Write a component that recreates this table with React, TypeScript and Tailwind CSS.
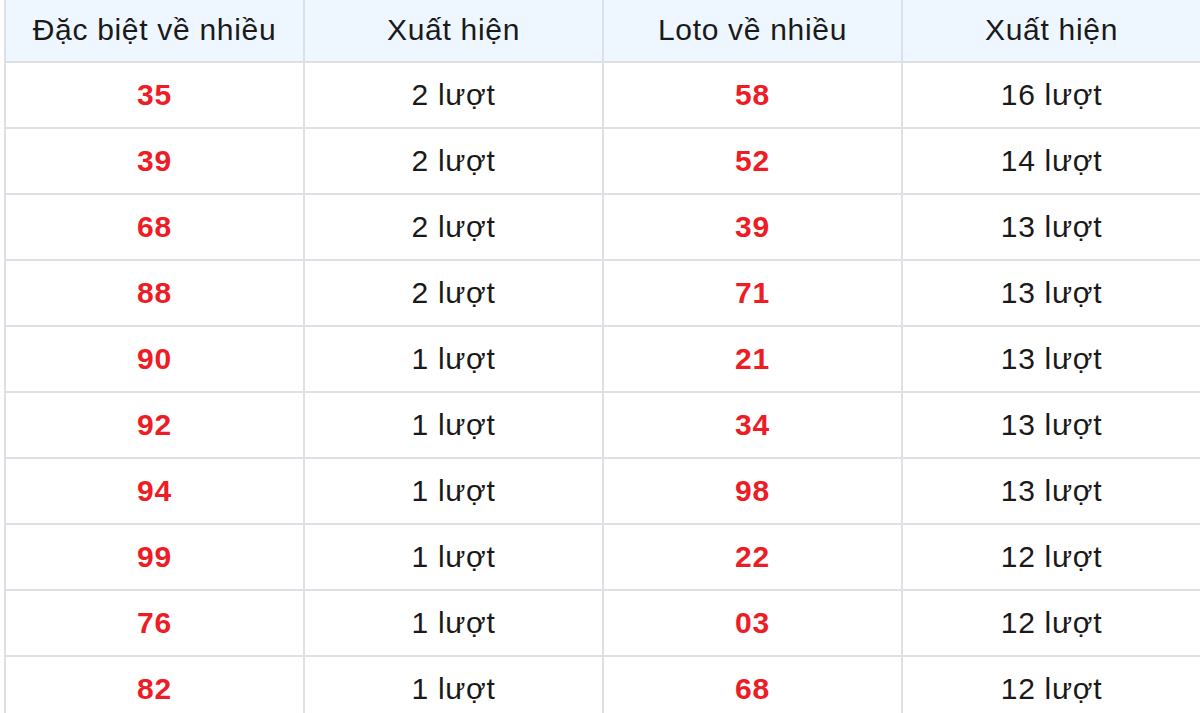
import React from "react";

const rows: [string, string, string, string][] = [
  ["35", "2 lượt", "58", "16 lượt"],
  ["39", "2 lượt", "52", "14 lượt"],
  ["68", "2 lượt", "39", "13 lượt"],
  ["88", "2 lượt", "71", "13 lượt"],
  ["90", "1 lượt", "21", "13 lượt"],
  ["92", "1 lượt", "34", "13 lượt"],
  ["94", "1 lượt", "98", "13 lượt"],
  ["99", "1 lượt", "22", "12 lượt"],
  ["76", "1 lượt", "03", "12 lượt"],
  ["82", "1 lượt", "68", "12 lượt"],
];

const headers = ["Đặc biệt về nhiều", "Xuất hiện", "Loto về nhiều", "Xuất hiện"];

export default function App() {
  return (
    <div className="w-[1200px] h-[713px] overflow-hidden bg-white" style={{ fontFamily: '"Liberation Sans", Arial, sans-serif' }}>
      <div className="ml-[4px] w-[1198px] border-l-2 border-[#dde0e4]">
        <div className="grid grid-cols-4 bg-[#eef6ff]">
          {headers.map((h, i) => (
            <div key={i} className="h-[63px] pb-[2px] flex items-center justify-center border-r-2 border-b-2 border-[#dde0e4] text-[30px] text-[#1a1a1a] tracking-[0.7px]">
              {h}
            </div>
          ))}
        </div>
        {rows.map((r, ri) => (
          <div key={ri} className="grid grid-cols-4">
            {r.map((c, ci) => (
              <div
                key={ci}
                className={
                  "h-[66px] pb-[1px] flex items-center justify-center border-r-2 border-b-2 border-[#dde0e4] text-[30px] tracking-[0.7px] " +
                  (ci % 2 === 0 ? "font-bold text-[#ee1c25]" : "text-[#1a1a1a]")
                }
              >
                {c}
              </div>
            ))}
          </div>
        ))}
      </div>
    </div>
  );
}
